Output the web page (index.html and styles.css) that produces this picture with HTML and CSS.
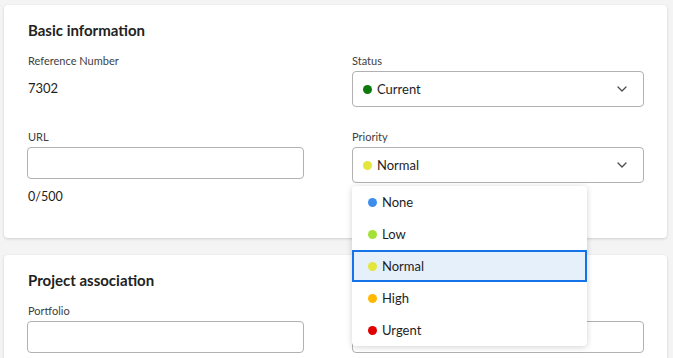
FILE: index.html
```html
<!DOCTYPE html>
<html>
<head>
<meta charset="utf-8">
<link rel="stylesheet" href="styles.css">
</head>
<body>
<div class="page">
  <section class="card card-basic">
    <h2 class="card-title">Basic information</h2>
    <div class="grid">
      <div class="field">
        <div class="label">Reference Number</div>
        <div class="value">7302</div>
      </div>
      <div class="field">
        <div class="label">Status</div>
        <div class="select">
          <span class="dot dot-current"></span><span class="select-text">Current</span>
          <svg class="chev" width="10" height="6" viewBox="0 0 10 6"><path d="M1 1 L5 5 L9 1" fill="none" stroke="#4b4b4b" stroke-width="1.3" stroke-linecap="round" stroke-linejoin="round"/></svg>
        </div>
      </div>
      <div class="field">
        <div class="label">URL</div>
        <div class="input input-url"></div>
        <div class="counter">0/500</div>
      </div>
      <div class="field">
        <div class="label">Priority</div>
        <div class="select">
          <span class="dot dot-normal"></span><span class="select-text">Normal</span>
          <svg class="chev" width="10" height="6" viewBox="0 0 10 6"><path d="M1 1 L5 5 L9 1" fill="none" stroke="#4b4b4b" stroke-width="1.3" stroke-linecap="round" stroke-linejoin="round"/></svg>
        </div>
      </div>
    </div>
  </section>

  <section class="card card-project">
    <h2 class="card-title">Project association</h2>
    <div class="grid">
      <div class="field">
        <div class="label">Portfolio</div>
        <div class="input input-url"></div>
      </div>
      <div class="field">
        <div class="label">Program</div>
        <div class="input"></div>
      </div>
    </div>
  </section>

  <ul class="menu">
    <li class="item"><span class="dot dot-none"></span>None</li>
    <li class="item"><span class="dot dot-low"></span>Low</li>
    <li class="item selected"><span class="dot dot-normal"></span>Normal</li>
    <li class="item"><span class="dot dot-high"></span>High</li>
    <li class="item"><span class="dot dot-urgent"></span>Urgent</li>
  </ul>
</div>
</body>
</html>
```

FILE: styles.css
```css
* { box-sizing: border-box; }
html, body { margin: 0; padding: 0; }
body {
  background: #f4f4f4;
  font-family: Lato, "Open Sans", sans-serif;
  color: #222;
  width: 673px;
  height: 358px;
  overflow: hidden;
}
.page {
  position: relative;
  padding: 5px 6px 0 4px;
}
.card {
  background: #fff;
  border-radius: 4px;
  box-shadow: 0 1px 3px rgba(0,0,0,0.16);
  padding: 15px 23px 0 24px;
}
.card-basic { height: 233px; }
.card-project { margin-top: 17px; height: 120px; }
.card-title {
  margin: 0;
  font-size: 15px;
  line-height: 20px;
  font-weight: 700;
  color: #222;
}
.grid {
  display: grid;
  grid-template-columns: 276px 292px;
  column-gap: 48px;
  row-gap: 21px;
  margin-top: 12px;
}
.card-project .grid { margin-top: 12px; }
.field { display: flex; flex-direction: column; }
.label {
  font-size: 11px;
  line-height: 18px;
  color: #3e3e3e;
  margin-bottom: 1px;
}
.value {
  font-size: 13px;
  line-height: 18px;
  margin-top: 8px;
  color: #1e1e1e;
}
.input {
  height: 32px;
  border: 1px solid #b1b1b1;
  border-radius: 4px;
  background: #fff;
}
.input-url { width: 277px; margin-left: -1px; }
.counter {
  font-size: 12.5px;
  line-height: 18px;
  margin-top: 9px;
  color: #222;
}
.select {
  height: 36px;
  border: 1px solid #b1b1b1;
  border-radius: 4px;
  display: flex;
  align-items: center;
  padding: 0 16px 0 10px;
  font-size: 13px;
  color: #1e1e1e;
}
.select-text { flex: 1; margin-left: 5px; }
.chev { display: block; }
.dot {
  display: inline-block;
  width: 9px;
  height: 9px;
  border-radius: 50%;
  flex: none;
}
.dot-current { background: #0c7a0c; }
.dot-normal { background: #e3e63b; }
.dot-none { background: #3e8ded; }
.dot-low { background: #a4e136; }
.dot-high { background: #ffb900; }
.dot-urgent { background: #e00000; }
.menu {
  position: absolute;
  left: 352px;
  top: 186px;
  width: 235px;
  margin: 0;
  padding: 0;
  list-style: none;
  background: #fff;
  border-radius: 4px;
  box-shadow: 0 1px 6px rgba(0,0,0,0.18);
}
.item {
  height: 32px;
  display: flex;
  align-items: center;
  padding-left: 16px;
  font-size: 13px;
  color: #1e1e1e;
  border: 2px solid transparent;
}
.item .dot { margin-right: 5px; margin-left: -2px; }
.item.selected {
  background: #e6f0fb;
  border-color: #1473e6;
}
```
